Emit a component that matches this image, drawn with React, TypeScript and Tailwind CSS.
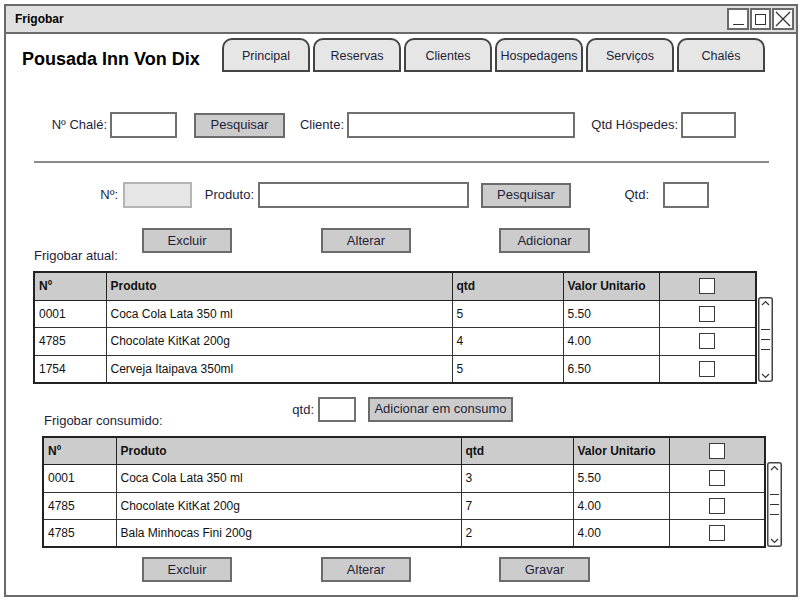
import React from "react";

const font = { fontFamily: '"Liberation Sans", Arial, sans-serif' };

function Btn({ label, w = "w-[90px]" }: { label: string; w?: string }) {
  return (
    <div
      className={`${w} flex h-[25px] shrink-0 items-center justify-center border-2 border-[#6b6b6b] bg-[#cccccc] text-[13px] text-[#1e1e38]`}
    >
      {label}
    </div>
  );
}

function Field({ w, gray = false }: { w: string; gray?: boolean }) {
  return (
    <div
      className={`${w} h-[26px] shrink-0 border-2 ${
        gray ? "border-[#b4b4b4] bg-[#e6e6e6]" : "border-[#707070] bg-white"
      }`}
    />
  );
}

function Check() {
  return <div className="mx-auto h-[16px] w-[16px] border-[1.5px] border-[#3a3a3a] bg-white" />;
}

function Scrollbar() {
  return (
    <svg width="15" height="85" viewBox="0 0 15 85" className="shrink-0">
      <rect x="0.75" y="0.75" width="13.5" height="83.5" rx="2" fill="white" stroke="#444" strokeWidth="1.5" />
      <path d="M4 8 L7.5 4.5 L11 8" fill="none" stroke="#333" strokeWidth="1.2" />
      <path d="M4 77 L7.5 80.5 L11 77" fill="none" stroke="#333" strokeWidth="1.2" />
      <path d="M3 32.5 H12 M3 42.5 H12 M3 52.5 H12" stroke="#333" strokeWidth="1.2" />
    </svg>
  );
}

type Row = [string, string, string, string];

function Grid({ rows, cols }: { rows: Row[]; cols: string[] }) {
  const heads = ["Nº", "Produto", "qtd", "Valor Unitario"];
  return (
    <table className="w-[722px] shrink-0 table-fixed border-collapse border-2 border-[#222] text-[12px] text-[#111]">
      <colgroup>
        {cols.map((c, i) => (
          <col key={i} className={c} />
        ))}
      </colgroup>
      <thead>
        <tr className="h-[28px] bg-[#cccccc]">
          {heads.map((h) => (
            <th key={h} className="border-[1.5px] border-[#222] px-[4px] text-left font-bold">
              {h}
            </th>
          ))}
          <th className="border-[1.5px] border-[#222]">
            <Check />
          </th>
        </tr>
      </thead>
      <tbody>
        {rows.map((r, i) => (
          <tr key={i} className="h-[27.5px]">
            {r.map((c, j) => (
              <td key={j} className="border-[1.5px] border-[#333] px-[4px]">
                {c}
              </td>
            ))}
            <td className="border-[1.5px] border-[#333]">
              <Check />
            </td>
          </tr>
        ))}
      </tbody>
    </table>
  );
}

export default function App() {
  const tabs = ["Principal", "Reservas", "Clientes", "Hospedagens", "Serviços", "Chalés"];

  return (
    <div className="h-[600px] w-[800px] bg-white pt-[4px] pl-[4px]" style={font}>
      <div className="flex h-[593px] w-[794px] flex-col border-2 border-[#6a6a6a]">
        {/* title bar */}
        <div className="flex h-[28px] shrink-0 items-center justify-between border-b-2 border-[#6a6a6a] bg-[#e0e0e0]">
          <span className="ml-[9px] text-[12px] font-bold text-black">Frigobar</span>
          <div className="mr-[2px] flex gap-[1px]">
            <div className="flex h-[22px] w-[22px] items-end justify-center border-2 border-[#6a6a6a] bg-white pb-[3px]">
              <div className="h-[1.5px] w-[11px] bg-[#333]" />
            </div>
            <div className="flex h-[22px] w-[21px] items-center justify-center border-2 border-[#6a6a6a] bg-white">
              <div className="h-[11px] w-[11px] border-[1.5px] border-[#333]" />
            </div>
            <div className="flex h-[22px] w-[22px] items-center justify-center border-2 border-[#6a6a6a] bg-white">
              <svg width="16" height="16" viewBox="0 0 16 16">
                <path d="M1 1 L15 15 M15 1 L1 15" stroke="#333" strokeWidth="1.3" />
              </svg>
            </div>
          </div>
        </div>

        {/* header + tabs */}
        <div className="mt-[4px] flex">
          <div className="ml-[16px] w-[200px] pt-[9px] text-[18px] font-bold leading-[24px] text-black">
            Pousada Inn Von Dix
          </div>
          <div className="flex gap-[3px]">
            {tabs.map((t) => (
              <div
                key={t}
                className="flex h-[34px] w-[88px] items-center justify-center rounded-t-[10px] border-2 border-[#444] bg-[#e6e6e6] pt-[2px] text-[12.5px] text-[#1e1e38]"
              >
                {t}
              </div>
            ))}
          </div>
        </div>

        {/* search row */}
        <div className="mt-[40px] flex items-center text-[13px] text-[#1e1e3c]">
          <span className="w-[101px] text-right">Nº Chalé:</span>
          <div className="ml-[3px]">
            <Field w="w-[67px]" />
          </div>
          <div className="ml-[17px]">
            <Btn label="Pesquisar" w="w-[91px]" />
          </div>
          <span className="w-[59px] text-right">Cliente:</span>
          <div className="ml-[3px]">
            <Field w="w-[228px]" />
          </div>
          <span className="w-[103px] text-right">Qtd Hóspedes:</span>
          <div className="ml-[3px]">
            <Field w="w-[55px]" />
          </div>
        </div>

        <div className="mt-[23px] ml-[28px] h-[2px] w-[735px] bg-[#8a8a8a]" />

        {/* product row */}
        <div className="mt-[19px] flex items-center text-[13px] text-[#1e1e3c]">
          <span className="w-[112px] text-right">Nº:</span>
          <div className="ml-[5px]">
            <Field w="w-[69px]" gray />
          </div>
          <span className="w-[62px] text-right">Produto:</span>
          <div className="ml-[4px]">
            <Field w="w-[211px]" />
          </div>
          <div className="ml-[12px]">
            <Btn label="Pesquisar" />
          </div>
          <span className="w-[78px] text-right">Qtd:</span>
          <div className="ml-[14px]">
            <Field w="w-[46px]" />
          </div>
        </div>

        {/* actions + label */}
        <div className="mt-[20px] flex h-[36px] text-[13px] text-[#1e1e3c]">
          <span className="ml-[28px] w-[108px] self-end leading-[16px]">Frigobar atual:</span>
          <div className="flex self-start">
            <Btn label="Excluir" />
            <div className="ml-[89px]">
              <Btn label="Alterar" />
            </div>
            <div className="ml-[88px]">
              <Btn label="Adicionar" w="w-[91px]" />
            </div>
          </div>
        </div>

        <div className="mt-[7px] ml-[27px] flex items-start">
          <Grid
            cols={["w-[72px]", "w-[346px]", "w-[111px]", "w-[96px]", "w-[97px]"]}
            rows={[
              ["0001", "Coca Cola Lata 350 ml", "5", "5.50"],
              ["4785", "Chocolate KitKat 200g", "4", "4.00"],
              ["1754", "Cerveja Itaipava 350ml", "5", "6.50"],
            ]}
          />
          <div className="mt-[26px] ml-[1px]">
            <Scrollbar />
          </div>
        </div>

        {/* consumption row */}
        <div className="mt-[13px] flex h-[32px] text-[13px] text-[#1e1e3c]">
          <span className="ml-[38px] w-[240px] self-end leading-[16px]">Frigobar consumido:</span>
          <span className="w-[30px] self-start text-right leading-[25px]">qtd:</span>
          <div className="ml-[4px] self-start">
            <div className="h-[25px] w-[38px] border-2 border-[#707070] bg-white" />
          </div>
          <div className="ml-[12px] self-start">
            <Btn label="Adicionar em consumo" w="w-[145px]" />
          </div>
        </div>

        <div className="mt-[7px] ml-[36px] flex items-start">
          <Grid
            cols={["w-[73px]", "w-[345px]", "w-[112px]", "w-[96px]", "w-[96px]"]}
            rows={[
              ["0001", "Coca Cola Lata 350 ml", "3", "5.50"],
              ["4785", "Chocolate KitKat 200g", "7", "4.00"],
              ["4785", "Bala Minhocas Fini 200g", "2", "4.00"],
            ]}
          />
          <div className="mt-[26px] ml-[1px]">
            <Scrollbar />
          </div>
        </div>

        <div className="mt-[9px] ml-[136px] flex">
          <Btn label="Excluir" />
          <div className="ml-[89px]">
            <Btn label="Alterar" />
          </div>
          <div className="ml-[88px]">
            <Btn label="Gravar" w="w-[91px]" />
          </div>
        </div>
      </div>
    </div>
  );
}
